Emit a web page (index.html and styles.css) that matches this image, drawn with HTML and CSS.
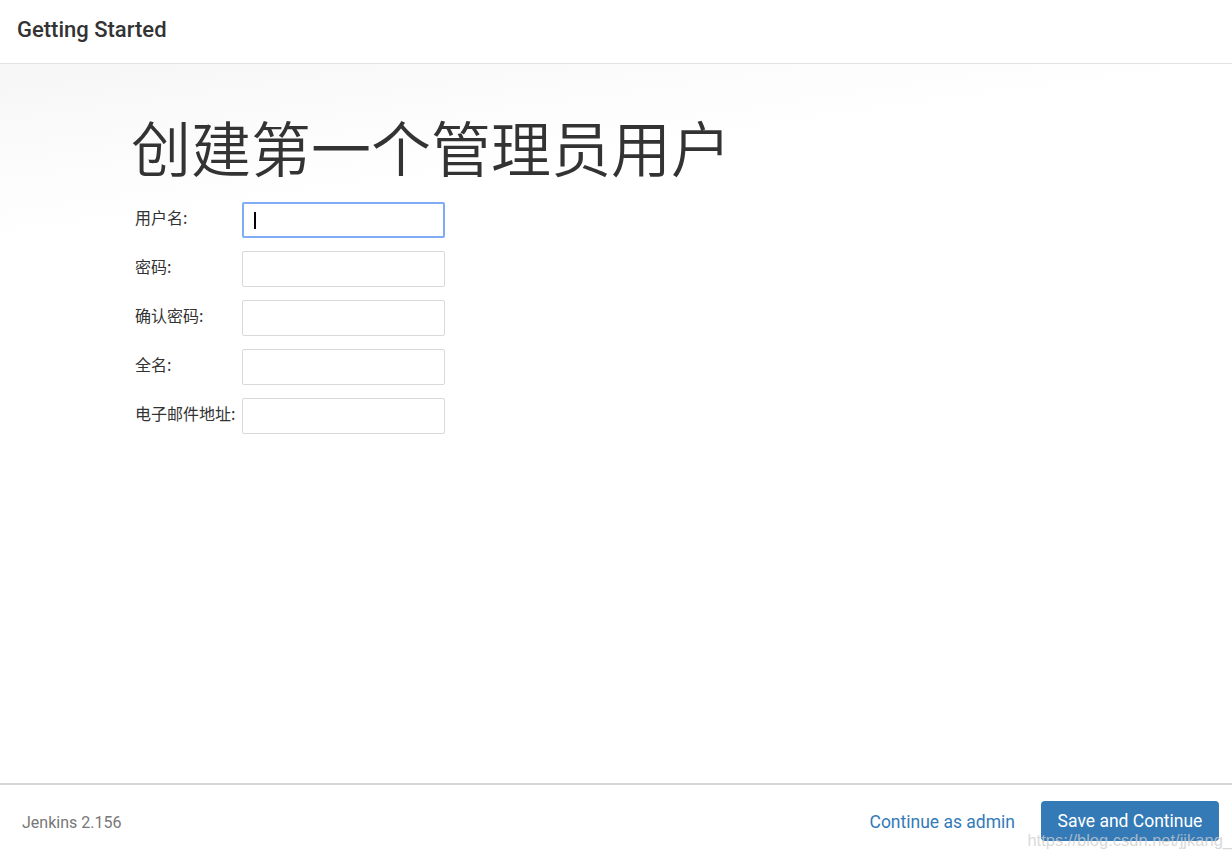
FILE: index.html
```html
<!DOCTYPE html>
<html lang="zh-CN">
<head>
<meta charset="utf-8">
<title>Getting Started</title>
<link rel="stylesheet" href="styles.css">
</head>
<body>
<div class="page">
  <header class="top">
    <h1 class="top-title">Getting Started</h1>
  </header>
  <main class="main">
    <h2 class="heading">创建第一个管理员用户</h2>
    <form class="form">
      <div class="row">
        <label class="label">用户名:</label>
        <div class="input focused"><span class="caret"></span></div>
      </div>
      <div class="row">
        <label class="label">密码:</label>
        <div class="input"></div>
      </div>
      <div class="row">
        <label class="label">确认密码:</label>
        <div class="input"></div>
      </div>
      <div class="row">
        <label class="label">全名:</label>
        <div class="input"></div>
      </div>
      <div class="row">
        <label class="label">电子邮件地址:</label>
        <div class="input"></div>
      </div>
    </form>
  </main>
  <footer class="footer">
    <span class="version">Jenkins 2.156</span>
    <div class="actions">
      <a class="link">Continue as admin</a>
      <button class="btn" type="button">Save and Continue</button>
    </div>
    <span class="watermark">https://blog.csdn.net/jjkang_</span>
  </footer>
</div>
</body>
</html>
```

FILE: styles.css
```css
* { box-sizing: border-box; }
html, body { margin: 0; padding: 0; height: 100%; }
body {
  font-family: Roboto, "Noto Sans CJK SC", "Liberation Sans", sans-serif;
  color: #333;
  background: #fff;
}
.page {
  height: 859px;
  display: flex;
  flex-direction: column;
}
.top {
  height: 64px;
  flex: none;
  border-bottom: 1px solid #e3e3e3;
  display: flex;
  align-items: center;
  padding-left: 17px;
  background: #fff;
}
.top-title {
  margin: 0;
  font-size: 22px;
  font-weight: 500;
  color: #333;
  padding-bottom: 5px;
}
.main {
  flex: 1;
  padding: 0 0 0 133px;
  background: linear-gradient(172deg, #f6f6f6 0px, #fbfbfb 90px, #ffffff 180px);
}
.heading {
  margin: 44px 0 0 -2px;
  font-family: "Noto Sans CJK SC", sans-serif;
  font-weight: 350;
  font-size: 60px;
  line-height: 76px;
  color: #333;
  letter-spacing: 0;
}
.form {
  margin-top: 18px;
  display: flex;
  flex-direction: column;
  gap: 13px;
}
.row {
  display: flex;
  align-items: flex-start;
}
.label {
  width: 109px;
  flex: none;
  padding: 4px 0 0 2px;
  font-family: "Noto Sans CJK SC", sans-serif;
  font-size: 16px;
  line-height: 22px;
  color: #333;
  white-space: nowrap;
}
.input {
  width: 203px;
  height: 36px;
  border: 1px solid #d9d9d9;
  border-radius: 2px;
  background: #fff;
  display: flex;
  align-items: center;
  padding-left: 11px;
}
.input.focused {
  border: 2px solid #80abf5;
  padding-left: 10px;
}
.caret {
  display: block;
  width: 2px;
  height: 17px;
  background: #000;
}
.footer {
  position: relative;
  height: 76px;
  flex: none;
  border-top: 2px solid #d6d6d6;
  background: #fff;
  display: flex;
  align-items: center;
  justify-content: space-between;
  padding: 0 13px 2px 22px;
}
.version {
  font-size: 16px;
  color: #777;
  padding-top: 3px;
}
.actions {
  display: flex;
  align-items: center;
  gap: 26px;
}
.link {
  font-size: 17.5px;
  color: #337ab7;
  text-decoration: none;
  padding-top: 2px;
}
.btn {
  width: 178px;
  height: 40px;
  border: none;
  border-radius: 4px;
  background: #337ab7;
  color: #fff;
  font-family: Roboto, sans-serif;
  font-size: 17.5px;
  padding: 0;
  line-height: 40px;
}
.watermark {
  position: absolute;
  right: 0;
  bottom: 9px;
  font-family: "Liberation Sans", Arial, sans-serif;
  font-size: 16.5px;
  color: rgba(205, 205, 205, 0.75);
  white-space: nowrap;
  pointer-events: none;
}
```
